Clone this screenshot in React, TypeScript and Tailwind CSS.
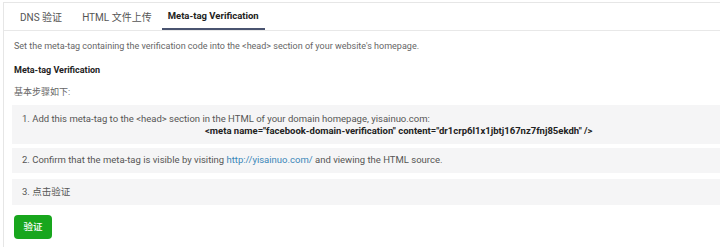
import React from "react";

const FONT = { fontFamily: 'Roboto, "Noto Sans CJK SC", sans-serif' };

const TABS = [
  { id: "dns", label: "DNS 验证", gap: "mr-[8px]" },
  { id: "html", label: "HTML 文件上传", gap: "mr-[4px]" },
  { id: "meta", label: "Meta-tag Verification", active: true, gap: "" },
];

export default function App() {
  return (
    <div className="relative h-[247px] w-[720px] overflow-hidden bg-white" style={FONT}>
      <div className="ml-[3px] mt-[2px] h-[245px] border-l border-t border-[#e6e6e6]">
        {/* tabs */}
        <div className="flex h-[28px] w-[717px] items-stretch border-b border-[#e8e8e8] pl-[10px]">
          {TABS.map((t) => (
            <div
              key={t.id}
              className={
                t.active
                  ? "flex items-center border-b-2 border-[#4a5470] px-[6px] pt-[2px] text-[9.5px] font-bold text-[#222]"
                  : `${t.gap} flex items-center px-[6px] pt-[2px] text-[10px] text-[#555]`
              }
            >
              {t.label}
            </div>
          ))}
        </div>

        <div className="pl-[10px] pt-[9px] text-[9px] text-[#666]">
          <p className="leading-[12px]">
            Set the meta-tag containing the verification code into the &lt;head&gt; section of your website's homepage.
          </p>
          <h3 className="mt-[12px] text-[9px] font-bold leading-[12px] text-[#222]">Meta-tag Verification</h3>
          <p className="mt-[10px] leading-[12px]">基本步骤如下:</p>
        </div>

        <div className="ml-[8px] mt-[7px] flex flex-col gap-[4px] text-[9.5px] text-[#555]">
          <div className="bg-[#f5f5f6] px-[10px] pb-[7px] pt-[8px] leading-[12px]">
            <p>1. Add this meta-tag to the &lt;head&gt; section in the HTML of your domain homepage, yisainuo.com:</p>
            <p className="pl-[183px] font-bold text-[#222]">
              &lt;meta name="facebook-domain-verification" content="dr1crp6l1x1jbtj167nz7fnj85ekdh" /&gt;
            </p>
          </div>
          <div className="flex h-[25px] items-center bg-[#f5f5f6] px-[10px]">
            <p>
              2. Confirm that the meta-tag is visible by visiting{" "}
              <a className="text-[#3a86b8]">http://yisainuo.com/</a> and viewing the HTML source.
            </p>
          </div>
          <div className="mt-[2px] flex h-[26px] items-center bg-[#f5f5f6] px-[10px]">
            <p>3. 点击验证</p>
          </div>
        </div>

        <div className="ml-[10px] mt-[10px]">
          <button className="flex h-[24px] w-[38px] items-center justify-center rounded-[4px] bg-[#18a61d] text-[9.5px] font-medium text-white">
            验证
          </button>
        </div>
      </div>
    </div>
  );
}
